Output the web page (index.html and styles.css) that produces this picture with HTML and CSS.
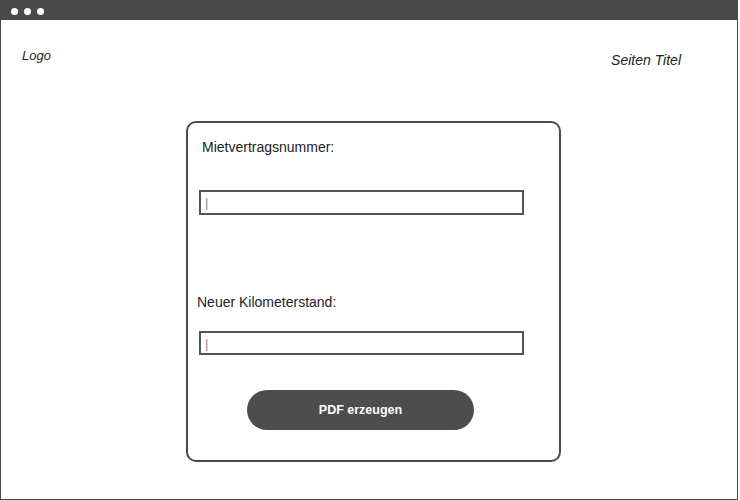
FILE: index.html
```html
<!DOCTYPE html>
<html lang="de">
<head>
<meta charset="utf-8">
<title>PDF erzeugen</title>
<link rel="stylesheet" href="styles.css">
</head>
<body>
<div class="window">
  <div class="titlebar">
    <span class="dot"></span><span class="dot"></span><span class="dot"></span>
  </div>
  <div class="header">
    <span class="logo">Logo</span>
    <span class="title">Seiten Titel</span>
  </div>
  <div class="card">
    <div class="label label-first">Mietvertragsnummer:</div>
    <div class="field field-first"><span class="caret">|</span></div>
    <div class="label label-second">Neuer Kilometerstand:</div>
    <div class="field field-second"><span class="caret">|</span></div>
    <div class="button">PDF erzeugen</div>
  </div>
</div>
</body>
</html>
```
FILE: styles.css
```css
html, body {
  margin: 0;
  padding: 0;
  background: #ffffff;
}
body {
  font-family: "Liberation Sans", Arial, sans-serif;
  color: #222222;
}
.window {
  width: 738px;
  height: 500px;
  box-sizing: border-box;
  border: 1px solid #4a4a4a;
  border-top: none;
  display: flex;
  flex-direction: column;
}
.titlebar {
  height: 20px;
  margin: 0 -1px;
  background: #4a4a4a;
  display: flex;
  align-items: center;
  gap: 6px;
  padding-left: 11px;
  padding-top: 2px;
  box-sizing: border-box;
}
.dot {
  width: 7px;
  height: 7px;
  border-radius: 50%;
  background: #ffffff;
}
.header {
  display: flex;
  justify-content: space-between;
  align-items: flex-start;
  padding: 28px 56px 0 21px;
  font-size: 13px;
  line-height: 15px;
  font-style: italic;
  color: #222222;
}
.title {
  margin-top: 4px;
  font-size: 14px;
  line-height: 16px;
}
.card {
  margin: 53px 0 0 185px;
  width: 375px;
  height: 341px;
  box-sizing: border-box;
  border: 2px solid #4a4a4a;
  border-radius: 10px;
  padding: 16px 0 0 11px;
  display: flex;
  flex-direction: column;
  align-items: flex-start;
}
.label {
  font-size: 14px;
  line-height: 16px;
  color: #222222;
}
.label-first {
  margin-left: 3px;
}
.label-second {
  margin-top: 79px;
  margin-left: -2px;
}
.field {
  width: 325px;
  height: 25px;
  box-sizing: border-box;
  border: 2px solid #555555;
  display: flex;
  align-items: center;
  padding-left: 4px;
  font-size: 13px;
  color: #8a8a8a;
}
.field-first {
  margin-top: 35px;
}
.field-second {
  margin-top: 21px;
  height: 24px;
}
.caret {
  line-height: 15px;
}
.button {
  margin: 35px 0 0 48px;
  width: 227px;
  height: 40px;
  border-radius: 20px;
  background: #4d4d4d;
  color: #ffffff;
  font-size: 12.5px;
  font-weight: bold;
  display: flex;
  align-items: center;
  justify-content: center;
}
```
